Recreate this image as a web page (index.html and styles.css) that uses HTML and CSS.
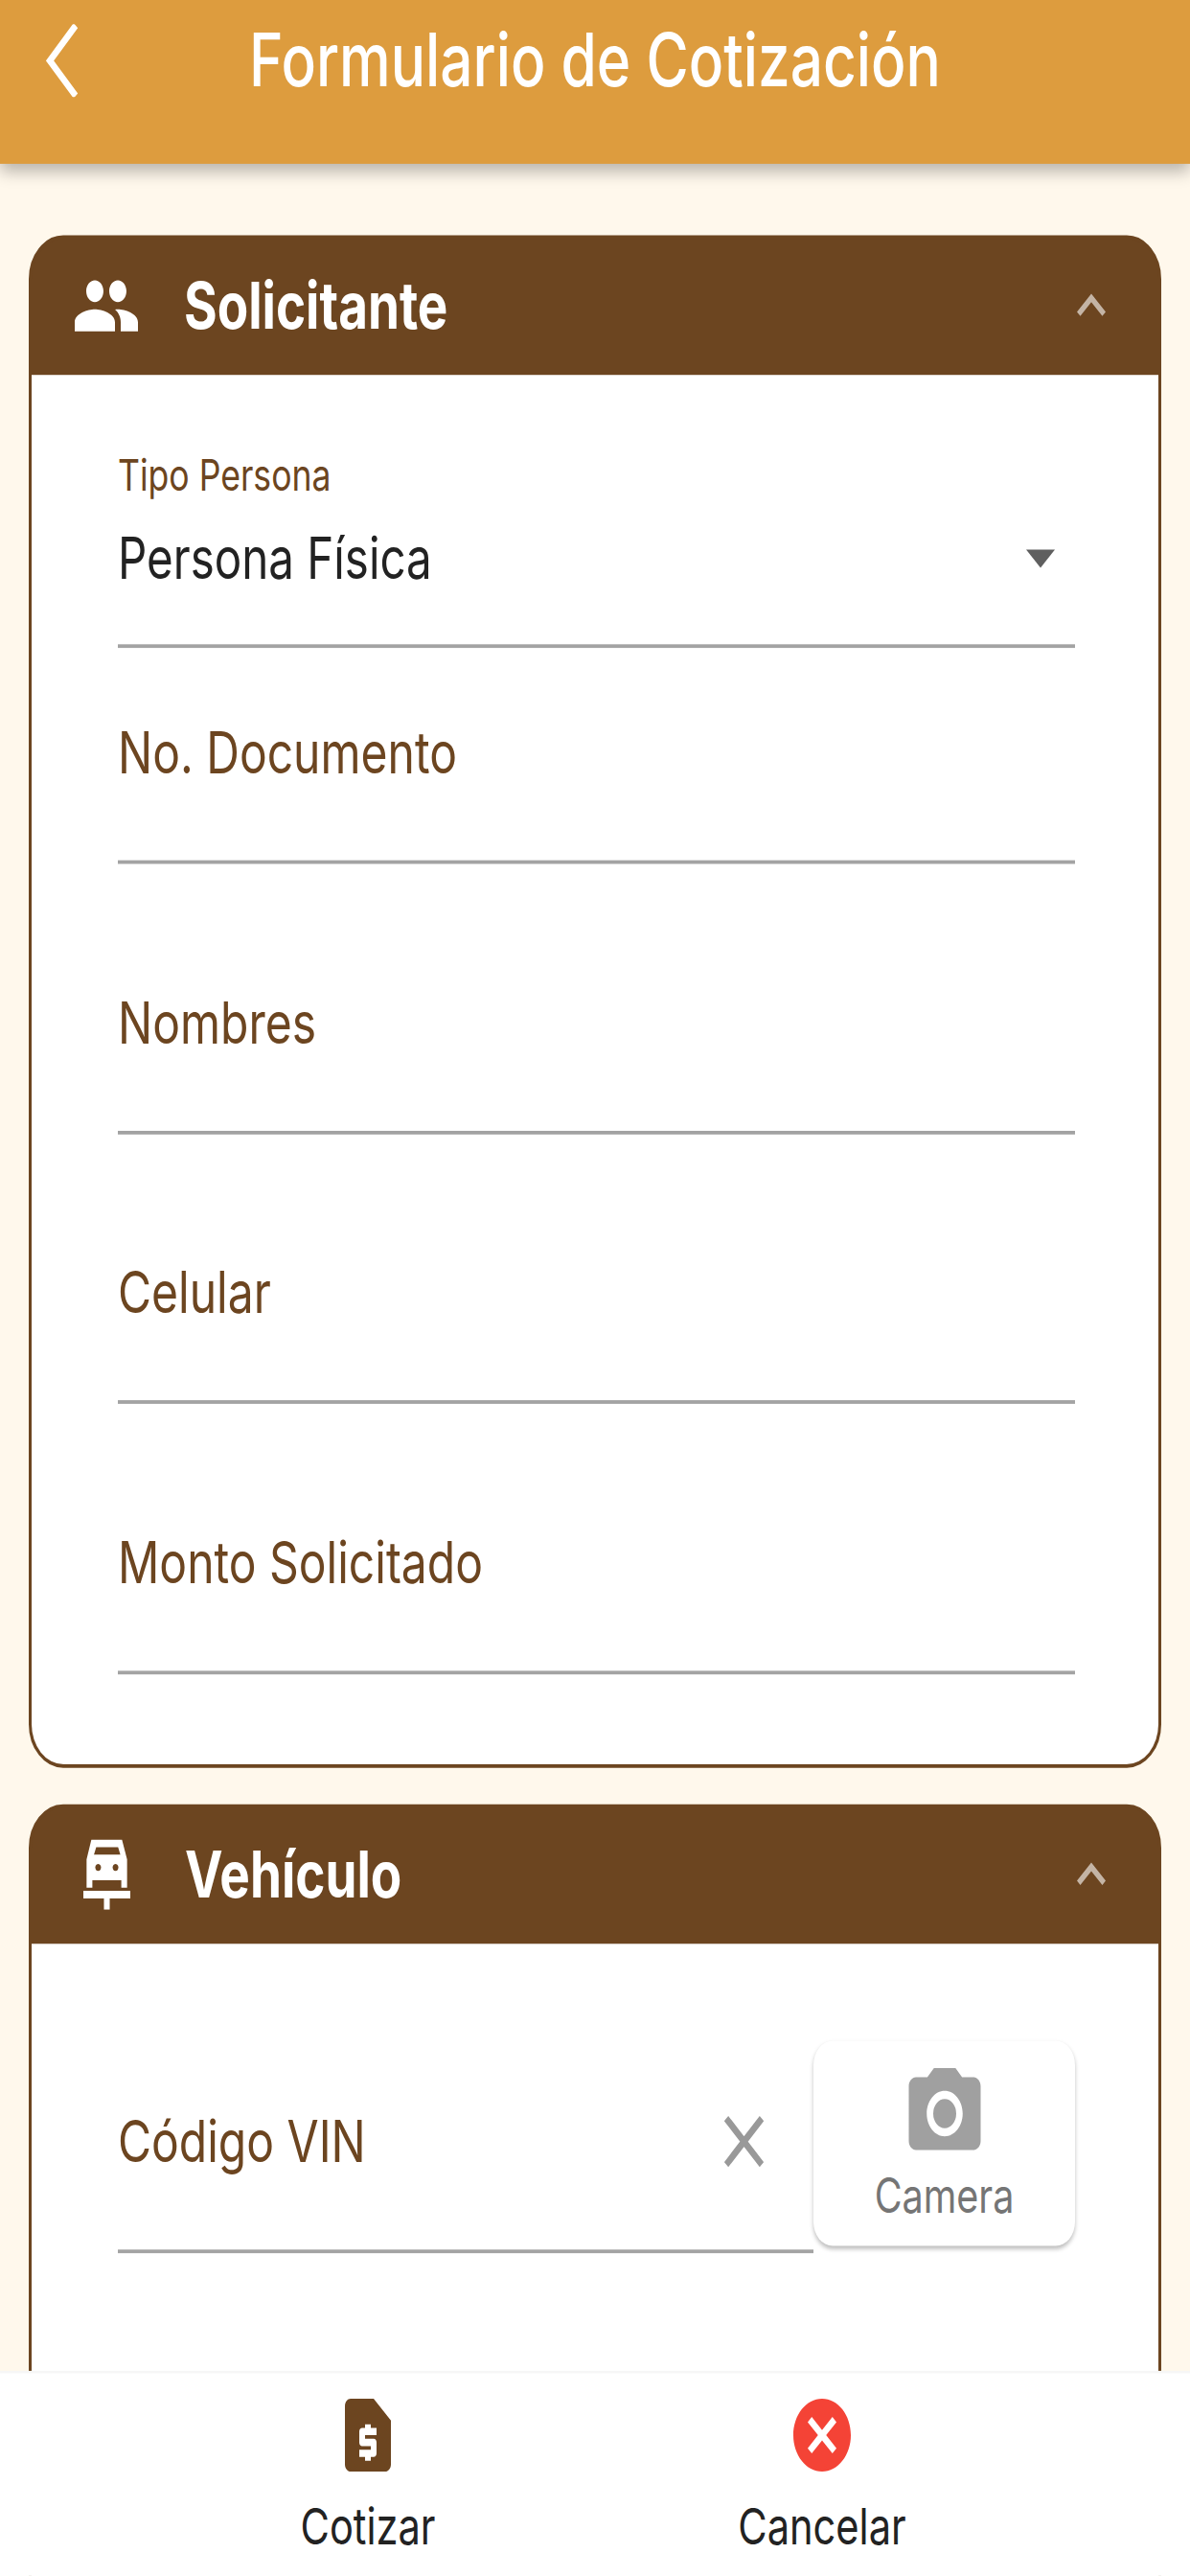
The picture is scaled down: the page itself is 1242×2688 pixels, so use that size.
FILE: index.html
```html
<!DOCTYPE html>
<html lang="es">
<head>
    <meta charset="UTF-8">
    <meta name="viewport" content="width=device-width, initial-scale=1.0">
    <title>Formulario de Cotización</title>
    <link rel="stylesheet" href="styles.css">
</head>
<body>
    <div class="screen">
        <header class="top-bar">
            <svg class="back-icon" viewBox="0 0 34 60" aria-hidden="true"><polyline points="31,1 4,30 31,59"/></svg>
            <div class="top-title">Formulario de Cotización</div>
        </header>

        <main class="content">
            <section class="card">
                <div class="card-head">
                    <svg class="head-icon" viewBox="0 0 24 24" aria-hidden="true"><path d="M16 11c1.66 0 2.99-1.34 2.99-3S17.66 5 16 5c-1.66 0-3 1.34-3 3s1.34 3 3 3zm-8 0c1.66 0 2.99-1.34 2.99-3S9.66 5 8 5C6.34 5 5 6.34 5 8s1.34 3 3 3zm0 2c-2.33 0-7 1.17-7 3.5V19h14v-2.5c0-2.33-4.67-3.5-7-3.5zm8 0c-.29 0-.62.02-.97.05 1.16.84 1.97 1.97 1.97 3.45V19h6v-2.5c0-2.33-4.67-3.5-7-3.5z"/></svg>
                    <h2 class="card-title">Solicitante</h2>
                    <svg class="chevron" viewBox="0 0 24 24" aria-hidden="true"><path d="M7.41 15.41 12 10.83l4.59 4.58L18 14l-6-6-6 6z"/></svg>
                </div>
                <div class="card-body">
                    <div class="select-field">
                        <div class="select-label">Tipo Persona</div>
                        <div class="select-row">
                            <span class="select-value">Persona Física</span>
                            <span class="select-arrow"></span>
                        </div>
                    </div>
                    <div class="field field-short"><span class="field-label">No. Documento</span></div>
                    <div class="field"><span class="field-label">Nombres</span></div>
                    <div class="field"><span class="field-label">Celular</span></div>
                    <div class="field"><span class="field-label">Monto Solicitado</span></div>
                </div>
            </section>

            <section class="card">
                <div class="card-head">
                    <svg class="head-icon car-icon" viewBox="80 93 146 219" preserveAspectRatio="none" aria-hidden="true">
                        <path fill-rule="evenodd" d="M105 93H200L216 155V243H198V220H108V243H90V155ZM120 117L113 140H195L188 117ZM126 169a9 11 0 1 0 .01 0ZM180 169a9 11 0 1 0 .01 0Z"/>
                        <path d="M80 253H226V277H162V312H144V277H80Z"/>
                    </svg>
                    <h2 class="card-title">Vehículo</h2>
                    <svg class="chevron" viewBox="0 0 24 24" aria-hidden="true"><path d="M7.41 15.41 12 10.83l4.59 4.58L18 14l-6-6-6 6z"/></svg>
                </div>
                <div class="card-body vin-body">
                    <div class="vin-row">
                        <div class="field vin-field">
                            <span class="field-label">Código VIN</span>
                            <svg class="clear-icon" viewBox="0 0 41 42" preserveAspectRatio="none" aria-hidden="true"><path d="M2 2 39 40M39 2 2 40"/></svg>
                        </div>
                        <div class="camera-btn">
                            <svg class="camera-icon" viewBox="0 0 24 24" aria-hidden="true"><path d="M12 15.2a3.2 3.2 0 1 0 0-6.4 3.2 3.2 0 0 0 0 6.4z"/><path d="M9 2 7.17 4H4c-1.1 0-2 .9-2 2v12c0 1.1.9 2 2 2h16c1.1 0 2-.9 2-2V6c0-1.1-.9-2-2-2h-3.17L15 2H9zm3 15c-2.76 0-5-2.24-5-5s2.24-5 5-5 5 2.24 5 5-2.24 5-5 5z"/></svg>
                            <span class="camera-text">Camera</span>
                        </div>
                    </div>
                </div>
            </section>
        </main>

        <nav class="bottom-bar">
            <div class="tab">
                <svg class="tab-icon quote-icon" viewBox="0 0 24 24" aria-hidden="true"><path d="M14 2H6c-1.1 0-1.99.9-1.99 2L4 20c0 1.1.89 2 1.99 2H18c1.1 0 2-.9 2-2V8l-6-6zm1 10h-4v1h3c.55 0 1 .45 1 1v3c0 .55-.45 1-1 1h-1v1h-2v-1H9v-2h4v-1h-3c-.55 0-1-.45-1-1v-3c0-.55.45-1 1-1h1V9h2v1h2v2z"/></svg>
                <span class="tab-text">Cotizar</span>
            </div>
            <div class="tab">
                <svg class="tab-icon cancel-icon" viewBox="0 0 24 24" aria-hidden="true"><path d="M12 2C6.47 2 2 6.47 2 12s4.47 10 10 10 10-4.47 10-10S17.53 2 12 2zm5 13.59L15.59 17 12 13.41 8.41 17 7 15.59 10.59 12 7 8.41 8.41 7 12 10.59 15.59 7 17 8.41 13.41 12 17 15.59z"/></svg>
                <span class="tab-text">Cancelar</span>
            </div>
        </nav>
    </div>
</body>
</html>
```

FILE: styles.css
```css
/* The whole capture is stretched vertically, so the app is laid out at its
   own height and scaled to fill the window */
html, body {
    margin: 0;
    padding: 0;
    width: 1242px;
    height: 2688px;
    overflow: hidden;
    background-color: #fff8ec;
}

.screen {
    position: relative;
    width: 1242px;
    height: 2123px;
    overflow: hidden;
    font-family: Inter, Roboto, "Liberation Sans", sans-serif;
    background-color: #fff8ec;
    transform: scaleY(1.2661);
    transform-origin: top left;
}

.top-bar {
    position: relative;
    z-index: 2;
    display: flex;
    height: 135px;
    padding-left: 48px;
    box-sizing: border-box;
    background-color: #dd9c3e;
    box-shadow: 0 6px 14px rgba(0, 0, 0, 0.28);
}

.back-icon {
    width: 34px;
    height: 60px;
    margin-top: 20px;
    fill: none;
    stroke: #fff;
    stroke-width: 6;
}

.top-title {
    position: absolute;
    top: 0;
    left: 0;
    width: 100%;
    text-align: center;
    line-height: 98px;
    font-size: 60.4px;
    font-weight: 500;
    color: #fff;
}

.content {
    padding: 59px 30px 0;
}

.card {
    border: 3px solid #6c4520;
    border-radius: 36px;
    background-color: #6c4520;
    overflow: hidden;
    margin-bottom: 30px;
}

.card-head {
    display: flex;
    align-items: center;
    height: 112px;
    padding: 0 40px 2px 42px;
    box-sizing: border-box;
}

.head-icon {
    width: 72px;
    height: 72px;
    fill: #fff;
}

.car-icon {
    width: 49px;
    height: 58px;
    margin: 0 12px;
}

.card-title {
    flex: 1;
    margin: 0 0 0 45px;
    font-size: 53px;
    font-weight: 700;
    color: #fff;
}

.chevron {
    width: 60px;
    height: 60px;
    fill: rgba(255, 255, 255, 0.6);
}

.card-body {
    padding: 63px 87px 74px 90px;
    background-color: #fff;
}

.select-field {
    height: 162px;
    box-sizing: border-box;
    border-bottom: 3px solid #a3a3a3;
}

.select-label {
    line-height: 40px;
    font-size: 35.6px;
    color: #6c4520;
}

.select-row {
    display: flex;
    justify-content: space-between;
    align-items: center;
    height: 50px;
    margin-top: 22px;
    padding-right: 21px;
}

.select-value {
    font-size: 47.5px;
    color: #222;
}

.select-arrow {
    width: 0;
    height: 0;
    margin-top: 2px;
    border-left: 15px solid transparent;
    border-right: 15px solid transparent;
    border-top: 15px solid #5f5f5f;
}

.field {
    display: flex;
    align-items: flex-end;
    height: 222.7px;
    box-sizing: border-box;
    padding-bottom: 68px;
    border-bottom: 3px solid #a3a3a3;
}

.field-short {
    height: 178px;
}

.field-label {
    flex: 1;
    line-height: 42px;
    font-size: 48px;
    color: #6c4520;
}

.vin-body {
    height: 600px;
    padding-top: 80px;
}

.vin-row {
    display: flex;
    align-items: flex-start;
    height: 175px;
}

.vin-field {
    flex: 1;
    height: 175px;
}

.clear-icon {
    width: 41px;
    height: 42px;
    margin-right: 52px;
    fill: none;
    stroke: #999;
    stroke-width: 6;
}

.camera-btn {
    display: flex;
    flex-direction: column;
    align-items: center;
    width: 273px;
    height: 169px;
    box-sizing: border-box;
    padding-top: 15px;
    border-radius: 20px;
    background-color: #fff;
    box-shadow: 0 2px 4px rgba(0, 0, 0, 0.25);
}

.camera-icon {
    width: 90px;
    height: 90px;
    fill: #a0a0a0;
}

.camera-text {
    margin-top: 3px;
    line-height: 40px;
    font-size: 39.5px;
    color: #757575;
}

.bottom-bar {
    position: absolute;
    left: 0;
    bottom: 0;
    z-index: 2;
    display: flex;
    width: 100%;
    height: 169px;
    box-sizing: border-box;
    padding: 15px 147px 0;
    background-color: #fff;
    border-top: 2px solid #f6f6f6;
}

.tab {
    flex: 1;
    display: flex;
    flex-direction: column;
    align-items: center;
}

.tab-icon {
    width: 72px;
    height: 72px;
}

.quote-icon {
    fill: #6c4520;
}

.cancel-icon {
    fill: #f44336;
}

.tab-text {
    margin-top: 14px;
    line-height: 50px;
    font-size: 41.6px;
    color: #222;
}
```
